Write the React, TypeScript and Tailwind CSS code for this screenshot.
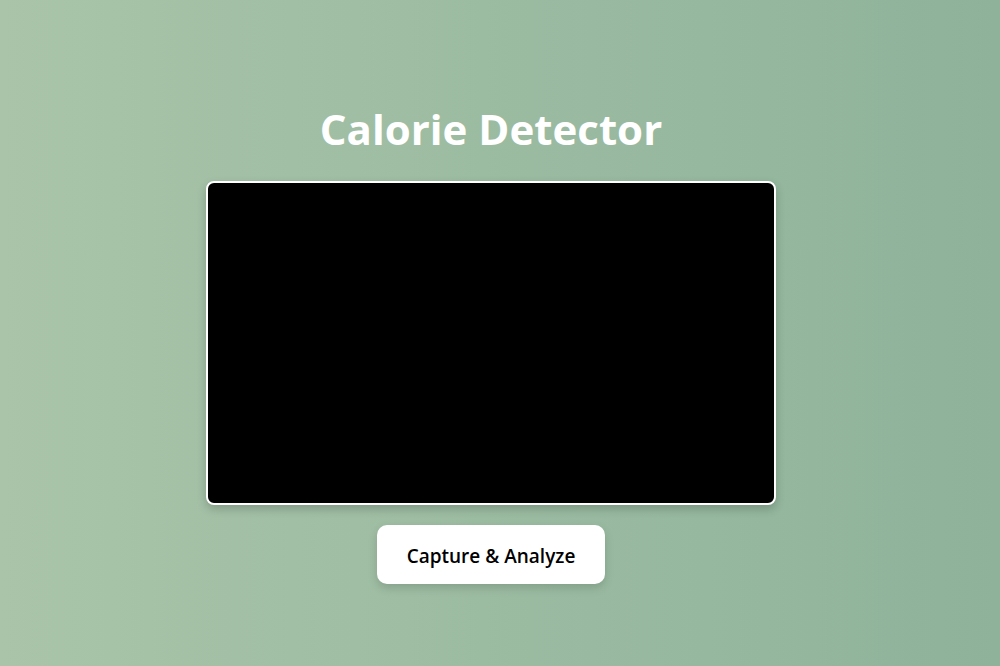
export default function App() {
  return (
    <div className="min-h-[666px] w-full bg-[linear-gradient(to_right,#a9c4a9,#8eb39a)] flex flex-col items-center pt-[102px] pr-[18px] font-['Open_Sans',sans-serif]">
      <h1 className="text-[42px] leading-[54px] font-bold text-white">Calorie Detector</h1>
      <div className="mt-[25px] w-[570px] h-[324px] bg-black border-2 border-white rounded-[8px] shadow-[0_4px_10px_rgba(0,0,0,0.2)]" />
      <button className="mt-[20px] w-[228px] h-[59px] pt-[3px] bg-white rounded-[10px] shadow-[0_4px_10px_rgba(0,0,0,0.15)] text-[19px] font-semibold text-black">
        Capture &amp; Analyze
      </button>
    </div>
  );
}
